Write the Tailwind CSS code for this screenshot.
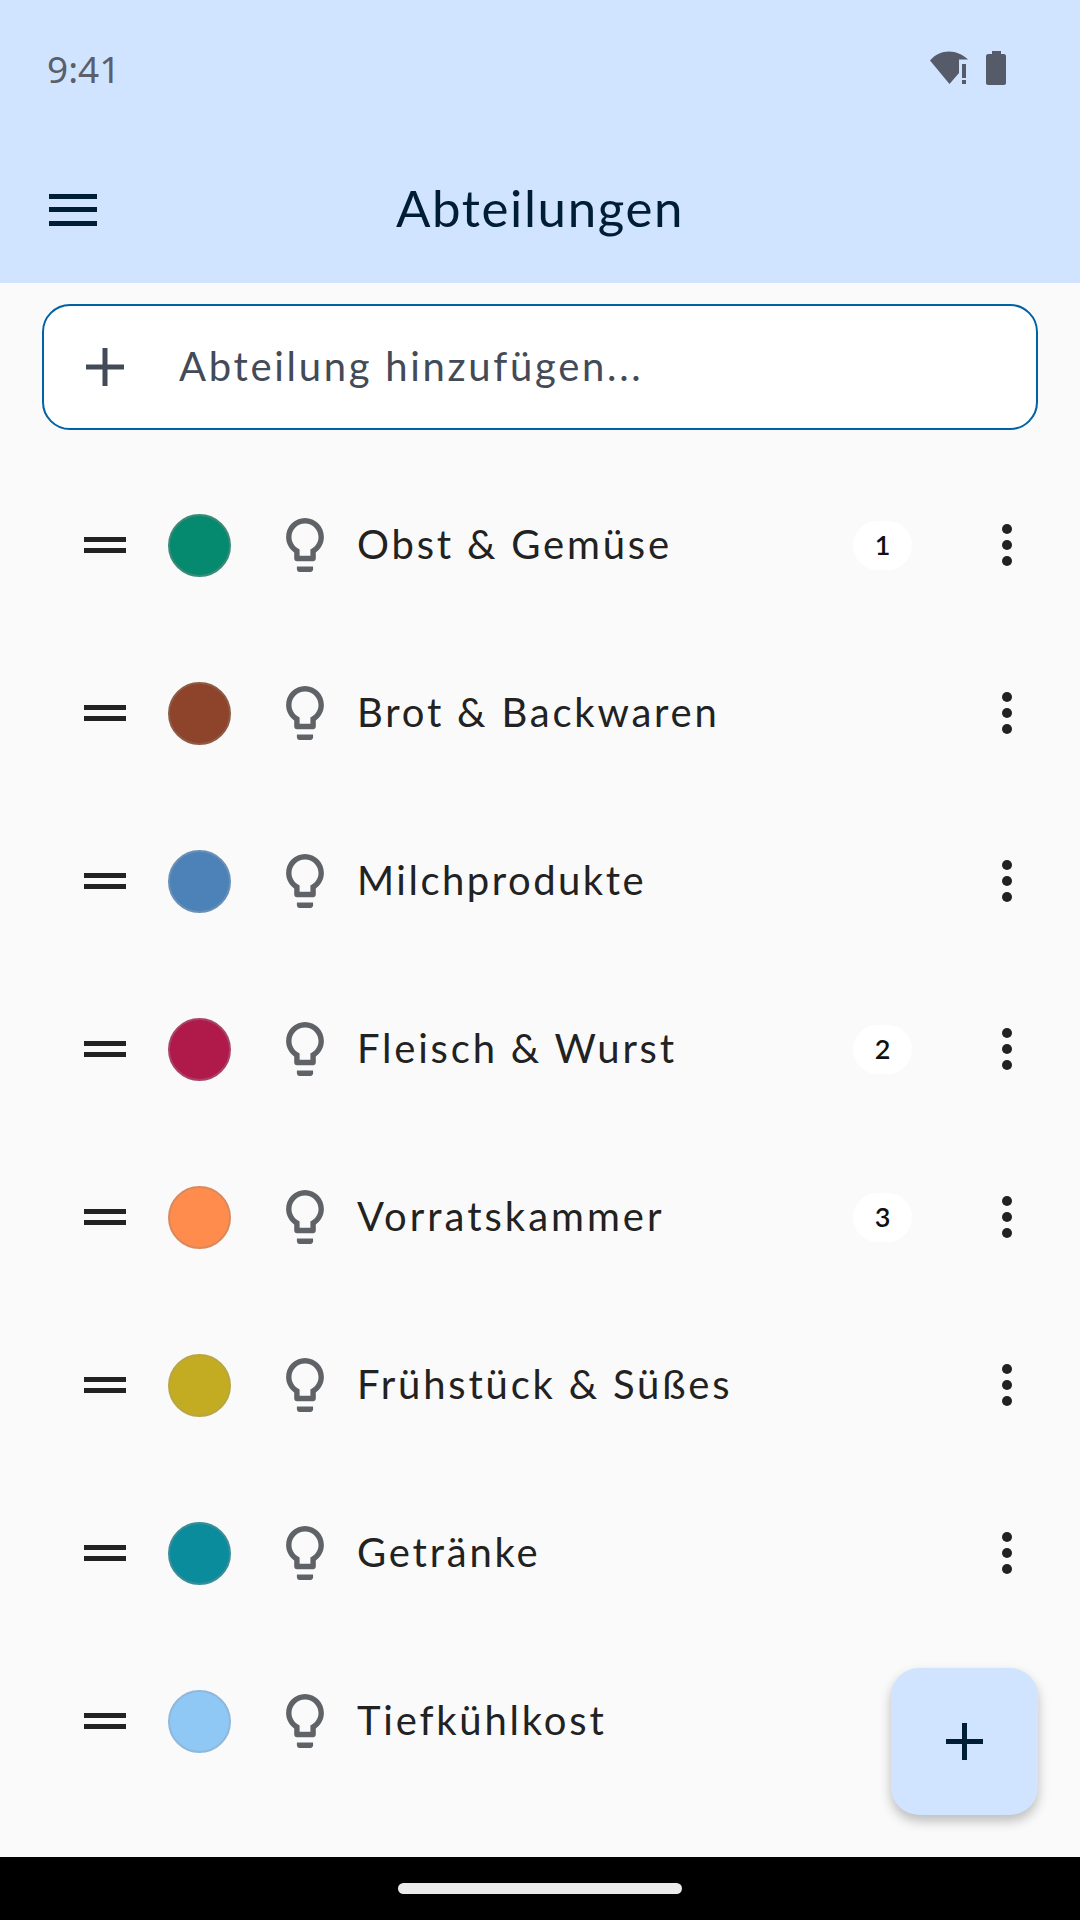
<!DOCTYPE html>
<html lang="de">
<head>
<meta charset="utf-8">
<script src="https://cdn.jsdelivr.net/npm/@tailwindcss/browser@4"></script>
</head>
<body class="m-0">
<div class="relative w-[1080px] h-[1920px] overflow-hidden flex flex-col bg-[#fafafa] font-['Lato','Noto_Sans',sans-serif]">
  <header class="h-[283px] shrink-0 bg-[#d1e4ff] flex flex-col">
    <div class="h-[133px] pt-[45px] pl-[47px] pr-[74px] flex items-start justify-between">
      <span class="text-[37px] leading-[48px] text-[#5a5f6b] font-['Noto_Sans',sans-serif]">9:41</span>
      <div class="flex items-start gap-[16px] mt-[6px]">
        <svg class="w-[40px] h-[34px]" viewBox="0 0 40 34"><path d="M0 9.500C5 3.500 12 0.500 19 0.500C26 0.500 33 3.500 38 8.500L29 8.500L29 22L19.500 33Z" fill="#555b68"/><rect x="32" y="13" width="4" height="14" fill="#555b68"/><rect x="32" y="29" width="4" height="4" fill="#555b68"/></svg>
        <svg class="w-[20px] h-[34px]" viewBox="0 0 20 34"><path d="M6 0H15V3H18C19 3 20 4 20 5V32C20 33 19 34 18 34H2C1 34 0 33 0 32V5C0 4 1 3 2 3H6Z" fill="#555b68"/></svg>
      </div>
    </div>
    <div class="relative h-[150px] flex items-center justify-center">
      <svg class="absolute left-[49px] top-[61px] w-[48px] h-[32px]" viewBox="0 0 48 32"><rect y="0" width="48" height="5" fill="#001d36"/><rect y="13" width="48" height="5" fill="#001d36"/><rect y="27" width="48" height="5" fill="#001d36"/></svg>
      <h1 class="text-[51px] leading-[60px] font-normal tracking-[1.600px] text-[#001d36]">Abteilungen</h1>
    </div>
  </header>

  <main class="flex-1 flex flex-col">
    <div class="mt-[21px] mx-[42px] h-[126px] shrink-0 rounded-[28px] border-[2.500px] border-[#0061a4] bg-white flex items-center pl-[42px]">
      <svg class="w-[38px] h-[38px] shrink-0" viewBox="0 0 38 38"><rect x="16.500" width="5" height="38" fill="#434a58"/><rect y="16.500" width="38" height="5" fill="#434a58"/></svg>
      <span class="ml-[55px] pb-[2px] text-[40px] leading-[50px] tracking-[2.700px] text-[#434a58]">Abteilung hinzufügen...</span>
    </div>

    <ul class="mt-[31px] flex flex-col">
      <li class="h-[168px] flex items-center pl-[84px] pr-[67px]">
        <svg class="w-[42px] h-[16px] shrink-0" viewBox="0 0 42 16"><rect width="42" height="5" fill="#222"/><rect y="11" width="42" height="5" fill="#222"/></svg>
        <span class="ml-[42px] w-[63px] h-[63px] rounded-full bg-[#068a6f] border-2 border-[#3d8a78] shrink-0"></span>
        <svg class="ml-[55px] w-[38px] h-[54px] shrink-0" viewBox="5 2 14 20" fill="#5f6368"><path d="M9 21c0 .55.45 1 1 1h4c.55 0 1-.45 1-1v-1H9v1zm3-19C8.140 2 5 5.140 5 9c0 2.380 1.190 4.470 3 5.740V17c0 .55.45 1 1 1h6c.55 0 1-.45 1-1v-2.260c1.810-1.270 3-3.360 3-5.740 0-3.860-3.140-7-7-7zm2.850 11.100l-.85.6V16h-4v-2.300l-.85-.6C7.800 12.160 7 10.630 7 9c0-2.760 2.240-5 5-5s5 2.240 5 5c0 1.630-.8 3.160-2.150 4.100z"/></svg>
        <span class="ml-[33px] pb-[2px] flex-1 text-[40px] leading-[50px] tracking-[2.800px] text-[#222]">Obst &amp; Gemüse</span>
        <span class="w-[59px] h-[49px] rounded-full bg-white flex items-center justify-center text-[27px] font-semibold text-[#111]">1</span>
        <svg class="ml-[89px] w-[12px] h-[44px] shrink-0" viewBox="0 0 12 44" fill="#222"><circle cx="6" cy="6" r="5"/><circle cx="6" cy="22" r="5"/><circle cx="6" cy="38" r="5"/></svg>
      </li>
      <li class="h-[168px] flex items-center pl-[84px] pr-[67px]">
        <svg class="w-[42px] h-[16px] shrink-0" viewBox="0 0 42 16"><rect width="42" height="5" fill="#222"/><rect y="11" width="42" height="5" fill="#222"/></svg>
        <span class="ml-[42px] w-[63px] h-[63px] rounded-full bg-[#8d442b] border-2 border-[#8f5a47] shrink-0"></span>
        <svg class="ml-[55px] w-[38px] h-[54px] shrink-0" viewBox="5 2 14 20" fill="#5f6368"><path d="M9 21c0 .55.45 1 1 1h4c.55 0 1-.45 1-1v-1H9v1zm3-19C8.140 2 5 5.140 5 9c0 2.380 1.190 4.470 3 5.740V17c0 .55.45 1 1 1h6c.55 0 1-.45 1-1v-2.260c1.810-1.270 3-3.360 3-5.740 0-3.860-3.140-7-7-7zm2.850 11.100l-.85.6V16h-4v-2.300l-.85-.6C7.800 12.160 7 10.630 7 9c0-2.760 2.240-5 5-5s5 2.240 5 5c0 1.630-.8 3.160-2.150 4.100z"/></svg>
        <span class="ml-[33px] pb-[2px] flex-1 text-[40px] leading-[50px] tracking-[2.800px] text-[#222]">Brot &amp; Backwaren</span>
        <svg class="ml-[89px] w-[12px] h-[44px] shrink-0" viewBox="0 0 12 44" fill="#222"><circle cx="6" cy="6" r="5"/><circle cx="6" cy="22" r="5"/><circle cx="6" cy="38" r="5"/></svg>
      </li>
      <li class="h-[168px] flex items-center pl-[84px] pr-[67px]">
        <svg class="w-[42px] h-[16px] shrink-0" viewBox="0 0 42 16"><rect width="42" height="5" fill="#222"/><rect y="11" width="42" height="5" fill="#222"/></svg>
        <span class="ml-[42px] w-[63px] h-[63px] rounded-full bg-[#4c82b8] border-2 border-[#6a90b5] shrink-0"></span>
        <svg class="ml-[55px] w-[38px] h-[54px] shrink-0" viewBox="5 2 14 20" fill="#5f6368"><path d="M9 21c0 .55.45 1 1 1h4c.55 0 1-.45 1-1v-1H9v1zm3-19C8.140 2 5 5.140 5 9c0 2.380 1.190 4.470 3 5.740V17c0 .55.45 1 1 1h6c.55 0 1-.45 1-1v-2.260c1.810-1.270 3-3.360 3-5.740 0-3.860-3.140-7-7-7zm2.850 11.100l-.85.6V16h-4v-2.300l-.85-.6C7.800 12.160 7 10.630 7 9c0-2.760 2.240-5 5-5s5 2.240 5 5c0 1.630-.8 3.160-2.150 4.100z"/></svg>
        <span class="ml-[33px] pb-[2px] flex-1 text-[40px] leading-[50px] tracking-[2.500px] text-[#222]">Milchprodukte</span>
        <svg class="ml-[89px] w-[12px] h-[44px] shrink-0" viewBox="0 0 12 44" fill="#222"><circle cx="6" cy="6" r="5"/><circle cx="6" cy="22" r="5"/><circle cx="6" cy="38" r="5"/></svg>
      </li>
      <li class="h-[168px] flex items-center pl-[84px] pr-[67px]">
        <svg class="w-[42px] h-[16px] shrink-0" viewBox="0 0 42 16"><rect width="42" height="5" fill="#222"/><rect y="11" width="42" height="5" fill="#222"/></svg>
        <span class="ml-[42px] w-[63px] h-[63px] rounded-full bg-[#b01a4b] border-2 border-[#a84467] shrink-0"></span>
        <svg class="ml-[55px] w-[38px] h-[54px] shrink-0" viewBox="5 2 14 20" fill="#5f6368"><path d="M9 21c0 .55.45 1 1 1h4c.55 0 1-.45 1-1v-1H9v1zm3-19C8.140 2 5 5.140 5 9c0 2.380 1.190 4.470 3 5.740V17c0 .55.45 1 1 1h6c.55 0 1-.45 1-1v-2.260c1.810-1.270 3-3.360 3-5.740 0-3.860-3.140-7-7-7zm2.850 11.100l-.85.6V16h-4v-2.300l-.85-.6C7.800 12.160 7 10.630 7 9c0-2.760 2.240-5 5-5s5 2.240 5 5c0 1.630-.8 3.160-2.150 4.100z"/></svg>
        <span class="ml-[33px] pb-[2px] flex-1 text-[40px] leading-[50px] tracking-[2.800px] text-[#222]">Fleisch &amp; Wurst</span>
        <span class="w-[59px] h-[49px] rounded-full bg-white flex items-center justify-center text-[27px] font-semibold text-[#111]">2</span>
        <svg class="ml-[89px] w-[12px] h-[44px] shrink-0" viewBox="0 0 12 44" fill="#222"><circle cx="6" cy="6" r="5"/><circle cx="6" cy="22" r="5"/><circle cx="6" cy="38" r="5"/></svg>
      </li>
      <li class="h-[168px] flex items-center pl-[84px] pr-[67px]">
        <svg class="w-[42px] h-[16px] shrink-0" viewBox="0 0 42 16"><rect width="42" height="5" fill="#222"/><rect y="11" width="42" height="5" fill="#222"/></svg>
        <span class="ml-[42px] w-[63px] h-[63px] rounded-full bg-[#ff8c4c] border-2 border-[#d98a5c] shrink-0"></span>
        <svg class="ml-[55px] w-[38px] h-[54px] shrink-0" viewBox="5 2 14 20" fill="#5f6368"><path d="M9 21c0 .55.45 1 1 1h4c.55 0 1-.45 1-1v-1H9v1zm3-19C8.140 2 5 5.140 5 9c0 2.380 1.190 4.470 3 5.740V17c0 .55.45 1 1 1h6c.55 0 1-.45 1-1v-2.260c1.810-1.270 3-3.360 3-5.740 0-3.860-3.140-7-7-7zm2.850 11.100l-.85.6V16h-4v-2.300l-.85-.6C7.800 12.160 7 10.630 7 9c0-2.760 2.240-5 5-5s5 2.240 5 5c0 1.630-.8 3.160-2.150 4.100z"/></svg>
        <span class="ml-[33px] pb-[2px] flex-1 text-[40px] leading-[50px] tracking-[3px] text-[#222]">Vorratskammer</span>
        <span class="w-[59px] h-[49px] rounded-full bg-white flex items-center justify-center text-[27px] font-semibold text-[#111]">3</span>
        <svg class="ml-[89px] w-[12px] h-[44px] shrink-0" viewBox="0 0 12 44" fill="#222"><circle cx="6" cy="6" r="5"/><circle cx="6" cy="22" r="5"/><circle cx="6" cy="38" r="5"/></svg>
      </li>
      <li class="h-[168px] flex items-center pl-[84px] pr-[67px]">
        <svg class="w-[42px] h-[16px] shrink-0" viewBox="0 0 42 16"><rect width="42" height="5" fill="#222"/><rect y="11" width="42" height="5" fill="#222"/></svg>
        <span class="ml-[42px] w-[63px] h-[63px] rounded-full bg-[#c4ac22] border-2 border-[#b8a645] shrink-0"></span>
        <svg class="ml-[55px] w-[38px] h-[54px] shrink-0" viewBox="5 2 14 20" fill="#5f6368"><path d="M9 21c0 .55.45 1 1 1h4c.55 0 1-.45 1-1v-1H9v1zm3-19C8.140 2 5 5.140 5 9c0 2.380 1.190 4.470 3 5.740V17c0 .55.45 1 1 1h6c.55 0 1-.45 1-1v-2.260c1.810-1.270 3-3.360 3-5.740 0-3.860-3.140-7-7-7zm2.850 11.100l-.85.6V16h-4v-2.300l-.85-.6C7.800 12.160 7 10.630 7 9c0-2.760 2.240-5 5-5s5 2.240 5 5c0 1.630-.8 3.160-2.150 4.100z"/></svg>
        <span class="ml-[33px] pb-[2px] flex-1 text-[40px] leading-[50px] tracking-[2.800px] text-[#222]">Frühstück &amp; Süßes</span>
        <svg class="ml-[89px] w-[12px] h-[44px] shrink-0" viewBox="0 0 12 44" fill="#222"><circle cx="6" cy="6" r="5"/><circle cx="6" cy="22" r="5"/><circle cx="6" cy="38" r="5"/></svg>
      </li>
      <li class="h-[168px] flex items-center pl-[84px] pr-[67px]">
        <svg class="w-[42px] h-[16px] shrink-0" viewBox="0 0 42 16"><rect width="42" height="5" fill="#222"/><rect y="11" width="42" height="5" fill="#222"/></svg>
        <span class="ml-[42px] w-[63px] h-[63px] rounded-full bg-[#0a8c9c] border-2 border-[#3d8d98] shrink-0"></span>
        <svg class="ml-[55px] w-[38px] h-[54px] shrink-0" viewBox="5 2 14 20" fill="#5f6368"><path d="M9 21c0 .55.45 1 1 1h4c.55 0 1-.45 1-1v-1H9v1zm3-19C8.140 2 5 5.140 5 9c0 2.380 1.190 4.470 3 5.740V17c0 .55.45 1 1 1h6c.55 0 1-.45 1-1v-2.260c1.810-1.270 3-3.360 3-5.740 0-3.860-3.140-7-7-7zm2.850 11.100l-.85.6V16h-4v-2.300l-.85-.6C7.800 12.160 7 10.630 7 9c0-2.760 2.240-5 5-5s5 2.240 5 5c0 1.630-.8 3.160-2.150 4.100z"/></svg>
        <span class="ml-[33px] pb-[2px] flex-1 text-[40px] leading-[50px] tracking-[2.800px] text-[#222]">Getränke</span>
        <svg class="ml-[89px] w-[12px] h-[44px] shrink-0" viewBox="0 0 12 44" fill="#222"><circle cx="6" cy="6" r="5"/><circle cx="6" cy="22" r="5"/><circle cx="6" cy="38" r="5"/></svg>
      </li>
      <li class="h-[168px] flex items-center pl-[84px] pr-[67px]">
        <svg class="w-[42px] h-[16px] shrink-0" viewBox="0 0 42 16"><rect width="42" height="5" fill="#222"/><rect y="11" width="42" height="5" fill="#222"/></svg>
        <span class="ml-[42px] w-[63px] h-[63px] rounded-full bg-[#90c8f5] border-2 border-[#8fb8da] shrink-0"></span>
        <svg class="ml-[55px] w-[38px] h-[54px] shrink-0" viewBox="5 2 14 20" fill="#5f6368"><path d="M9 21c0 .55.45 1 1 1h4c.55 0 1-.45 1-1v-1H9v1zm3-19C8.140 2 5 5.140 5 9c0 2.380 1.190 4.470 3 5.740V17c0 .55.45 1 1 1h6c.55 0 1-.45 1-1v-2.260c1.810-1.270 3-3.360 3-5.740 0-3.860-3.140-7-7-7zm2.850 11.100l-.85.6V16h-4v-2.300l-.85-.6C7.800 12.160 7 10.630 7 9c0-2.760 2.240-5 5-5s5 2.240 5 5c0 1.630-.8 3.160-2.150 4.100z"/></svg>
        <span class="ml-[33px] pb-[2px] flex-1 text-[40px] leading-[50px] tracking-[2.800px] text-[#222]">Tiefkühlkost</span>
      </li>
    </ul>
  </main>

  <button class="absolute left-[891px] top-[1668px] w-[147px] h-[147px] rounded-[28px] bg-[#d1e4ff] shadow-[0_6px_12px_rgba(0,0,0,0.25)] flex items-center justify-center">
    <svg class="w-[37px] h-[37px]" viewBox="0 0 37 37"><rect x="16" width="5" height="37" fill="#001d36"/><rect y="16" width="37" height="5" fill="#001d36"/></svg>
  </button>

  <footer class="h-[63px] shrink-0 bg-black flex justify-center pt-[26px]">
    <div class="w-[284px] h-[11px] rounded-full bg-[#ebebeb]"></div>
  </footer>
</div>
</body>
</html>
